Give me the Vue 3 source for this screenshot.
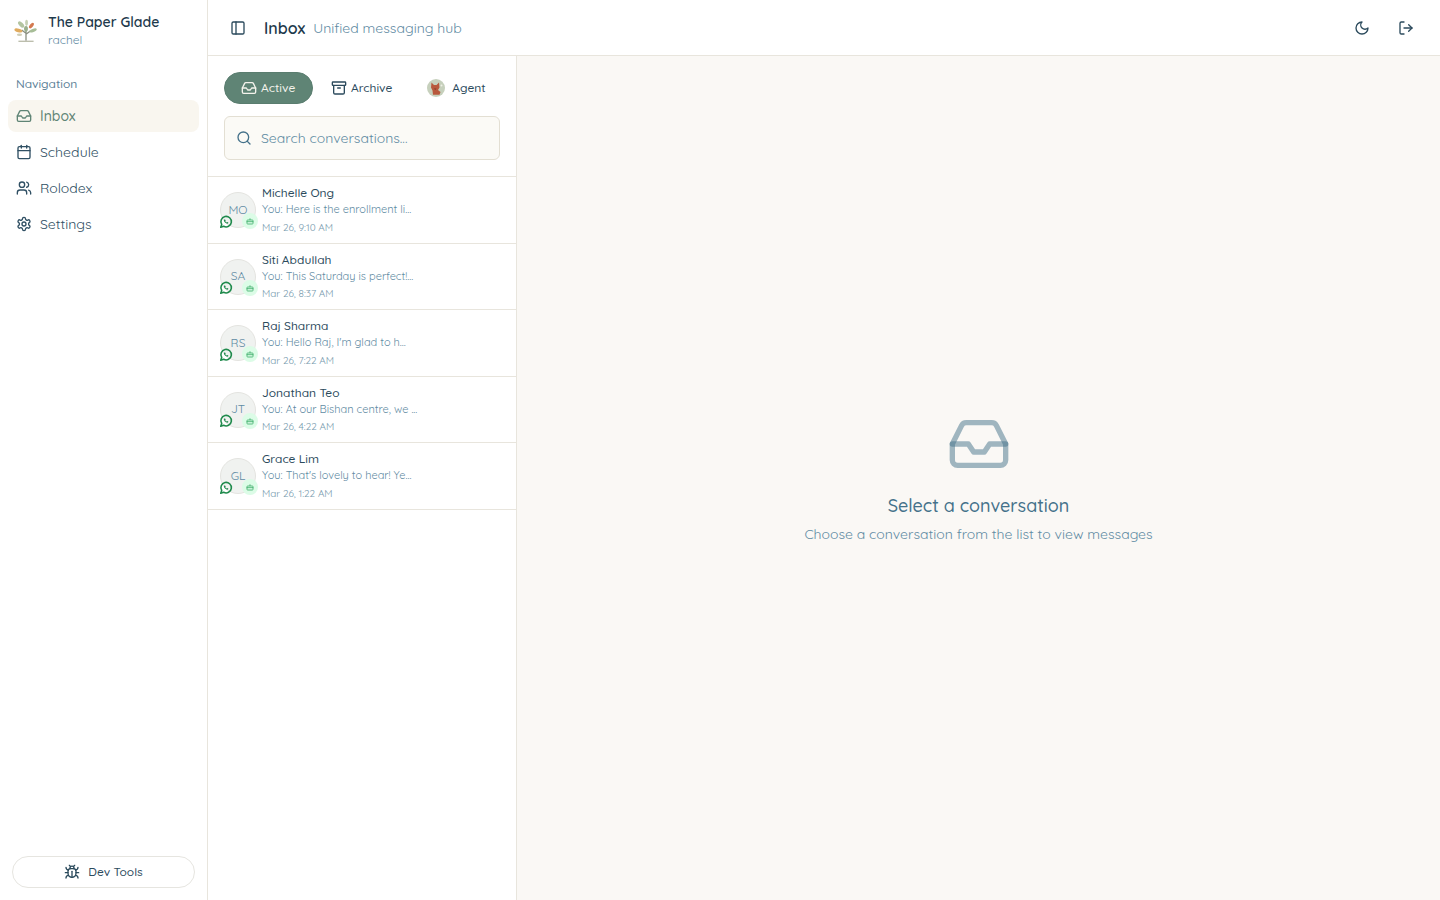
<template>
  <div class="app">
    <aside class="sidebar">
      <div class="brand">
        <svg class="logo" viewBox="0 0 24 24" width="26" height="26">
          <path d="M12 21V11M12 15l4-3M12 14L8 11" stroke="#8a8f80" stroke-width="1.2" fill="none" />
          <path d="M5 21.500h14" stroke="#b8baa8" stroke-width="1.200" />
          <ellipse cx="7.500" cy="6" rx="3.600" ry="1.800" transform="rotate(45 7.500 6)" fill="#b4c5a1" />
          <ellipse cx="12.500" cy="4.500" rx="1.300" ry="2.800" fill="#c5d0b3" />
          <ellipse cx="17" cy="7" rx="3" ry="1.500" transform="rotate(-50 17 7)" fill="#d4794f" />
          <ellipse cx="5" cy="11.500" rx="3.800" ry="1.600" transform="rotate(15 5 11.500)" fill="#e0ab5f" />
          <ellipse cx="18.500" cy="11.500" rx="3.600" ry="1.500" transform="rotate(-20 18.500 11.500)" fill="#a7bd97" />
          <ellipse cx="6" cy="15.500" rx="2.400" ry="1.100" fill="#cfcdb6" />
          <ellipse cx="12" cy="10" rx="1.800" ry="2.600" fill="#9ab08c" />
        </svg>
        <div>
          <div class="brand-name">The Paper Glade</div>
          <div class="brand-user">rachel</div>
        </div>
      </div>

      <div class="nav-label">Navigation</div>
      <nav class="nav">
        <a v-for="item in navItems" :key="item.label" class="nav-item" :class="{ active: item.active }">
          <svg class="icon" viewBox="0 0 24 24" width="16" height="16">
            <path v-for="d in item.paths" :key="d" :d="d" />
          </svg>
          <span>{{ item.label }}</span>
        </a>
      </nav>

      <button class="dev-btn">
        <svg class="icon" viewBox="0 0 24 24" width="16" height="16">
          <path v-for="d in bugPaths" :key="d" :d="d" />
        </svg>
        Dev Tools
      </button>
    </aside>

    <div class="main">
      <header class="topbar">
        <svg class="icon toggle" viewBox="0 0 24 24" width="16" height="16">
          <rect x="3" y="3" width="18" height="18" rx="2" />
          <path d="M9 3v18" />
        </svg>
        <h1 class="title">Inbox</h1>
        <span class="subtitle">Unified messaging hub</span>
        <div class="top-actions">
          <svg class="icon" viewBox="0 0 24 24" width="16" height="16">
            <path d="M12 3a6 6 0 0 0 9 9 9 9 0 1 1-9-9Z" />
          </svg>
          <svg class="icon" viewBox="0 0 24 24" width="16" height="16">
            <path d="M9 21H5a2 2 0 0 1-2-2V5a2 2 0 0 1 2-2h4" />
            <path d="m16 17 5-5-5-5" />
            <path d="M21 12H9" />
          </svg>
        </div>
      </header>

      <div class="content">
        <section class="list-panel">
          <div class="list-head">
            <div class="tabs">
              <button class="tab tab-active">
                <svg class="icon" viewBox="0 0 24 24" width="16" height="16">
                  <path v-for="d in inboxPaths" :key="d" :d="d" />
                </svg>
                Active
              </button>
              <button class="tab tab-archive">
                <svg class="icon" viewBox="0 0 24 24" width="16" height="16">
                  <rect x="2" y="3" width="20" height="5" rx="1" />
                  <path d="M4 8v11a2 2 0 0 0 2 2h12a2 2 0 0 0 2-2V8" />
                  <path d="M10 12h4" />
                </svg>
                Archive
              </button>
              <button class="tab tab-agent">
                <svg class="agent-pic" viewBox="0 0 18 18" width="18" height="18">
                  <circle cx="9" cy="9" r="9" fill="#c6d0bc" />
                  <path d="M4.500 3.500 7 6h2.500L12 3.500l.5 5L11 11l2.500 2-1 2.800H6l-.5-4.300L4 8.500Z" fill="#b8583c" />
                  <path d="M7 9.500 8.200 11l1.300-1.500Z" fill="#7e3a28" />
                  <circle cx="14.500" cy="6.500" r="1" fill="#eef0e6" />
                </svg>
                Agent
              </button>
            </div>
            <div class="search">
              <svg class="icon" viewBox="0 0 24 24" width="16" height="16">
                <circle cx="11" cy="11" r="8" />
                <path d="m21 21-4.300-4.300" />
              </svg>
              <span>Search conversations...</span>
            </div>
          </div>

          <div class="rows">
            <div v-for="c in conversations" :key="c.name" class="row">
              <div class="avatar-wrap">
                <div class="avatar">{{ c.initials }}</div>
                <svg class="wa" viewBox="0 0 24 24" width="14" height="14">
                  <path d="M3 21l1.650-4.700a9 9 0 1 1 3.400 3.100Z" fill="none" stroke="#1f8a4c" stroke-width="2.700" stroke-linejoin="round" />
                  <path d="M9 7.500c-1.200 1-.5 3.500 1.300 5.300s4.200 2.700 5.400 1.500l.3-1.300-2-1.100-1 .8c-1-.4-1.800-1.200-2.300-2.200l.8-1-1.100-2Z" fill="#1f8a4c" />
                </svg>
                <span class="bot">
                  <svg viewBox="0 0 24 24" width="8" height="8">
                    <rect x="3" y="9" width="18" height="12" rx="2" />
                    <path d="M12 9V4" />
                    <path d="M2 14h20" />
                  </svg>
                </span>
              </div>
              <div class="row-text">
                <div class="row-name">{{ c.name }}</div>
                <div class="row-msg">{{ c.message }}</div>
                <div class="row-time">{{ c.time }}</div>
              </div>
            </div>
          </div>
        </section>

        <section class="empty">
          <svg class="empty-icon" viewBox="0 0 24 24" width="64" height="64">
            <path d="M22 12h-6l-2 3h-4l-2-3H2" />
            <path d="M5.450 5.110 2 12v6a2 2 0 0 0 2 2h16a2 2 0 0 0 2-2v-6l-3.450-6.890A2 2 0 0 0 16.760 4H7.240a2 2 0 0 0-1.790 1.110Z" />
          </svg>
          <h2 class="empty-title">Select a conversation</h2>
          <p class="empty-text">Choose a conversation from the list to view messages</p>
        </section>
      </div>
    </div>
  </div>
</template>

<script setup>
const inboxPaths = [
  'M22 12h-6l-2 3h-4l-2-3H2',
  'M5.450 5.110 2 12v6a2 2 0 0 0 2 2h16a2 2 0 0 0 2-2v-6l-3.450-6.890A2 2 0 0 0 16.760 4H7.240a2 2 0 0 0-1.790 1.110Z'
]

const bugPaths = [
  'M8 2l1.900 1.900',
  'M14.100 3.900 16 2',
  'M9 7.100v-1a3 3 0 1 1 6 0v1',
  'M12 20c-3.300 0-6-2.700-6-6v-3a4 4 0 0 1 4-4h4a4 4 0 0 1 4 4v3c0 3.300-2.700 6-6 6Z',
  'M12 20v-9',
  'M6.500 9C4.600 8.800 3 7.100 3 5',
  'M6 13H2',
  'M3 21c0-2.100 1.700-3.900 3.800-4',
  'M20.970 5c0 2.100-1.600 3.800-3.500 4',
  'M22 13h-4',
  'M17.200 17c2.100.1 3.800 1.900 3.800 4'
]

const navItems = [
  { label: 'Inbox', active: true, paths: inboxPaths },
  {
    label: 'Schedule',
    paths: ['M8 2v4', 'M16 2v4', 'M5 4h14a2 2 0 0 1 2 2v14a2 2 0 0 1-2 2H5a2 2 0 0 1-2-2V6a2 2 0 0 1 2-2Z', 'M3 10h18']
  },
  {
    label: 'Rolodex',
    paths: [
      'M16 21v-2a4 4 0 0 0-4-4H6a4 4 0 0 0-4 4v2',
      'M9 3a4 4 0 1 1 0 8 4 4 0 0 1 0-8Z',
      'M22 21v-2a4 4 0 0 0-3-3.870',
      'M16 3.130a4 4 0 0 1 0 7.750'
    ]
  },
  {
    label: 'Settings',
    paths: [
      'M12.220 2h-.44a2 2 0 0 0-2 2v.18a2 2 0 0 1-1 1.730l-.43.25a2 2 0 0 1-2 0l-.15-.08a2 2 0 0 0-2.730.73l-.22.380a2 2 0 0 0 .73 2.730l.15.1a2 2 0 0 1 1 1.720v.510a2 2 0 0 1-1 1.740l-.15.090a2 2 0 0 0-.73 2.730l.22.380a2 2 0 0 0 2.730.730l.15-.080a2 2 0 0 1 2 0l.43.250a2 2 0 0 1 1 1.730V20a2 2 0 0 0 2 2h.44a2 2 0 0 0 2-2v-.18a2 2 0 0 1 1-1.730l.43-.25a2 2 0 0 1 2 0l.15.080a2 2 0 0 0 2.730-.730l.22-.390a2 2 0 0 0-.73-2.730l-.15-.080a2 2 0 0 1-1-1.740v-.5a2 2 0 0 1 1-1.740l.15-.090a2 2 0 0 0 .73-2.730l-.22-.380a2 2 0 0 0-2.730-.730l-.15.080a2 2 0 0 1-2 0l-.43-.25a2 2 0 0 1-1-1.730V4a2 2 0 0 0-2-2Z',
      'M12 9a3 3 0 1 1 0 6 3 3 0 0 1 0-6Z'
    ]
  }
]

const conversations = [
  { initials: 'MO', name: 'Michelle Ong', message: 'You: Here is the enrollment li...', time: 'Mar 26, 9:10 AM' },
  { initials: 'SA', name: 'Siti Abdullah', message: 'You: This Saturday is perfect!...', time: 'Mar 26, 8:37 AM' },
  { initials: 'RS', name: 'Raj Sharma', message: "You: Hello Raj, I'm glad to h...", time: 'Mar 26, 7:22 AM' },
  { initials: 'JT', name: 'Jonathan Teo', message: 'You: At our Bishan centre, we ...', time: 'Mar 26, 4:22 AM' },
  { initials: 'GL', name: 'Grace Lim', message: "You: That's lovely to hear! Ye...", time: 'Mar 26, 1:22 AM' }
]
</script>

<style>
html,
body {
  margin: 0;
  background: #fff;
}
</style>

<style scoped>
.app {
  display: flex;
  height: 900px;
  overflow: hidden;
  font-family: "Quicksand", "Nunito", "Lato", sans-serif;
  color: #2b4a5c;
}

.icon {
  fill: none;
  stroke: currentColor;
  stroke-width: 2;
  stroke-linecap: round;
  stroke-linejoin: round;
  flex-shrink: 0;
}

.sidebar {
  width: 207px;
  border-right: 1px solid #e8e5dd;
  display: flex;
  flex-direction: column;
  flex-shrink: 0;
}

.brand {
  display: flex;
  align-items: center;
  gap: 9px;
  padding: 11px 13px 0;
  height: 39px;
}

.logo {
  width: 26px;
  height: 26px;
}

.brand-name {
  font-size: 14px;
  line-height: 18px;
  font-weight: 600;
  color: #1e3a4c;
}

.brand-user {
  font-size: 12px;
  line-height: 17px;
  font-weight: 400;
  color: #5f8ba3;
}

.nav-label {
  margin-top: 26px;
  padding: 0 16px;
  height: 16px;
  font-size: 12px;
  line-height: 16px;
  font-weight: 500;
  color: #5d8198;
}

.nav {
  display: flex;
  flex-direction: column;
  gap: 4px;
  margin-top: 8px;
  padding: 0 8px;
}

.nav-item {
  height: 32px;
  display: flex;
  align-items: center;
  gap: 8px;
  padding: 0 8px;
  border-radius: 8px;
  font-size: 14px;
  font-weight: 400;
  color: #2f4f63;
}

.nav-item.active {
  background: #f9f6ef;
  color: #5f8475;
  font-weight: 500;
}

.dev-btn {
  margin: auto 12px 12px;
  height: 32px;
  display: flex;
  align-items: center;
  justify-content: center;
  gap: 8px;
  border: 1px solid #e6e5e0;
  border-radius: 16px;
  background: #fff;
  font: inherit;
  font-size: 12px;
  line-height: 16px;
  font-weight: 500;
  color: #2b4a5c;
  padding: 0 0 1px;
}

.main {
  flex: 1;
  min-width: 0;
  display: flex;
  flex-direction: column;
}

.topbar {
  height: 55px;
  border-bottom: 1px solid #e8e5dd;
  display: flex;
  align-items: center;
  padding: 0 26px 0 22px;
  flex-shrink: 0;
}

.toggle {
  margin-right: 18px;
}

.title {
  margin: 0;
  font-size: 16px;
  font-weight: 600;
  color: #1e3a4c;
}

.subtitle {
  margin-left: 8px;
  font-size: 14px;
  font-weight: 400;
  color: #5f8ba3;
}

.top-actions {
  margin-left: auto;
  display: flex;
  gap: 28px;
}

.content {
  flex: 1;
  min-height: 0;
  display: flex;
}

.list-panel {
  width: 308px;
  border-right: 1px solid #e8e5dd;
  flex-shrink: 0;
}

.list-head {
  padding: 16px 16px;
  border-bottom: 1px solid #e8e5dd;
}

.tabs {
  display: flex;
  align-items: center;
  height: 32px;
}

.tab {
  height: 32px;
  display: flex;
  align-items: center;
  gap: 4px;
  padding: 0 17px 2px;
  border: 0;
  border-radius: 16px;
  background: none;
  font: inherit;
  font-size: 12px;
  font-weight: 500;
  color: #2b4a5c;
}

.tab .icon,
.agent-pic {
  margin-top: 2px;
}

.tab-active {
  width: 89px;
  padding-left: 16px;
  background: #5f8475;
  color: #f4f3ec;
  border: 1px solid #5a7d6f;
}

.tab-archive {
  margin-left: 1px;
}

.tab-agent {
  gap: 7px;
  margin-left: 1px;
}

.search {
  margin-top: 12px;
  height: 42px;
  display: flex;
  align-items: center;
  gap: 9px;
  padding: 0 11px;
  border: 1px solid #e3dfd3;
  border-radius: 6px;
  background: #fbfaf6;
  font-size: 14px;
  font-weight: 400;
  color: #5f8ba3;
}

.search .icon {
  color: #44718a;
}

.row {
  height: 65.600px;
  display: flex;
  gap: 6px;
  padding: 0 12px;
  border-bottom: 1px solid #e8e5dd;
}

.avatar-wrap {
  position: relative;
  width: 36px;
  height: 36px;
  margin-top: 15px;
  flex-shrink: 0;
}

.avatar {
  width: 34px;
  height: 32px;
  padding-bottom: 2px;
  border: 1px solid #e4e4e0;
  border-radius: 50%;
  background: #f0f2f0;
  display: flex;
  align-items: center;
  justify-content: center;
  font-size: 12px;
  font-weight: 400;
  color: #5f8ba3;
}

.wa {
  position: absolute;
  left: -1px;
  bottom: -0.600px;
}

.bot {
  position: absolute;
  right: -2px;
  bottom: -1px;
  width: 16px;
  height: 16px;
  border-radius: 50%;
  background: #dcfce7;
  display: flex;
  align-items: center;
  justify-content: center;
}

.bot svg {
  fill: none;
  stroke: #3fae6a;
  stroke-width: 2.500;
}

.row-text {
  padding-top: 7px;
  min-width: 0;
}

.row-name {
  font-size: 12px;
  line-height: 17px;
  font-weight: 500;
  color: #2b4a5c;
}

.row-msg {
  font-size: 11px;
  line-height: 16px;
  font-weight: 400;
  color: #5f8ba3;
}

.row-time {
  margin-top: 3.500px;
  font-size: 10px;
  line-height: 14px;
  font-weight: 400;
  color: #7699ad;
}

.empty {
  flex: 1;
  background: #faf8f5;
  display: flex;
  flex-direction: column;
  align-items: center;
  padding-top: 356px;
}

.empty-icon {
  fill: none;
  stroke: #44718a;
  stroke-opacity: 0.5;
  stroke-width: 2;
  stroke-linecap: round;
  stroke-linejoin: round;
}

.empty-title {
  margin: 16px 0 0;
  font-size: 18px;
  line-height: 28px;
  font-weight: 500;
  color: #44718a;
}

.empty-text {
  margin: 4px 0 0;
  font-size: 14px;
  line-height: 20px;
  font-weight: 400;
  color: #5f8ba3;
}
</style>
